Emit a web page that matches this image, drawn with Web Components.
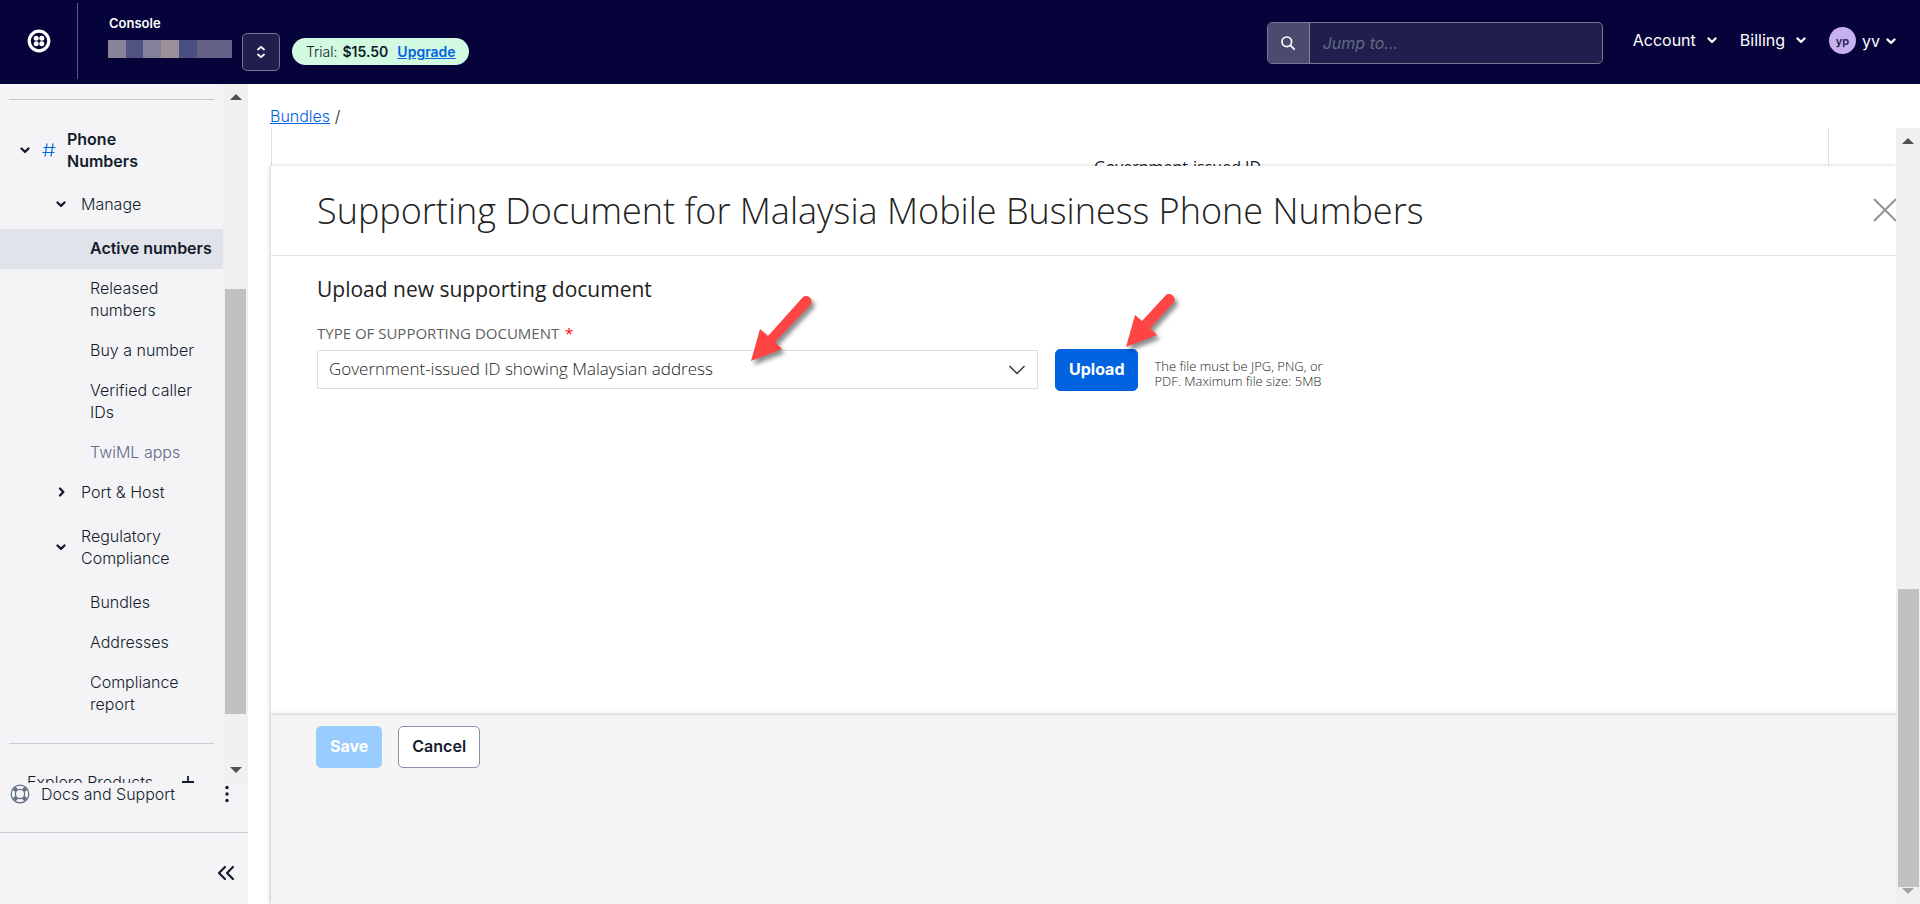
<!DOCTYPE html>
<html lang="en">
<head>
<meta charset="utf-8">
<title>Supporting Document - Console</title>
<style>
html, body { margin: 0; height: 100%; overflow: hidden; }
body { font: 16px/22px Inter, "Open Sans", sans-serif; color: #121c2d; background: #fff; }
</style>
</head>
<body>
<console-app></console-app>

<script>
const define = (name, html, setup) => customElements.define(name, class extends HTMLElement {
  connectedCallback() {
    if (this.shadowRoot) return;
    const t = document.createElement('template');
    t.innerHTML = '<style>*{box-sizing:border-box}</style>' + (typeof html === 'function' ? html(this) : html);
    this.attachShadow({ mode: 'open' }).append(t.content.cloneNode(true));
    if (setup) setup(this);
  }
});

/* Icons: [width, height, svg body] */
const ICONS = {
  logo: [24, 24, '<circle cx="12" cy="12" r="9.8" fill="none" stroke="#fff" stroke-width="3.2"/><g fill="#fff"><circle cx="9.2" cy="9.2" r="2.5"/><circle cx="14.8" cy="9.2" r="2.5"/><circle cx="9.2" cy="14.8" r="2.5"/><circle cx="14.8" cy="14.8" r="2.5"/></g>'],
  down: [10, 10, '<path d="M1.5 3.5 5 6.8 8.5 3.5" fill="none" stroke="currentColor" stroke-width="2.3" stroke-linecap="round" stroke-linejoin="round"/>'],
  right: [10, 10, '<path d="M4 1.5 7.3 5 4 8.5" fill="none" stroke="currentColor" stroke-width="2.3" stroke-linecap="round" stroke-linejoin="round"/>'],
  updown: [10, 14, '<path d="M2 4.5 5 1.8 8 4.5M2 9.5 5 12.2 8 9.5" fill="none" stroke="currentColor" stroke-width="1.8" stroke-linecap="round" stroke-linejoin="round"/>'],
  search: [16, 16, '<circle cx="6.8" cy="6.8" r="4.8" fill="none" stroke="currentColor" stroke-width="1.7"/><path d="m10.4 10.4 3.8 3.8" stroke="currentColor" stroke-width="1.9" stroke-linecap="round"/>'],
  hash: [14, 14, '<path d="M5 .5 3 13.5M11 .5 9 13.5M1.5 4.5h12M.5 9.5h12" fill="none" stroke="#0263e0" stroke-width="1.2"/>'],
  plus: [14, 14, '<path d="M7 1v12M1 7h12" stroke="currentColor" stroke-width="1.8"/>'],
  buoy: [20, 20, '<g fill="none" stroke="#606b85"><circle cx="10" cy="10" r="8.8" stroke-width="1.2"/><circle cx="10" cy="10" r="4.6" stroke-width="1.2"/><path d="M4.300 4.300 6.500 6.500M15.700 4.300 13.500 6.500M4.300 15.700 6.500 13.500M15.700 15.700 13.500 13.500" stroke-width="4"/></g>'],
  dots: [4, 18, '<g fill="currentColor"><circle cx="2" cy="2.5" r="1.7"/><circle cx="2" cy="9" r="1.7"/><circle cx="2" cy="15.5" r="1.7"/></g>'],
  collapse: [18, 16, '<path d="M8 2 2 8l6 6M16 2l-6 6 6 6" fill="none" stroke="currentColor" stroke-width="2.2" stroke-linecap="round" stroke-linejoin="round"/>'],
  close: [24, 24, '<path d="M1 1 23 23M23 1 1 23" stroke="#949494" stroke-width="2"/>'],
  caret: [12, 6, '<path d="M0 6 6 0l6 6z" fill="currentColor"/>']
};
define('ui-icon', el => {
  const [w, h, body] = ICONS[el.getAttribute('name')];
  return `<style>:host{display:block;flex:none;width:${w}px;height:${h}px}svg{display:block}</style>
    <svg width="${w}" height="${h}" viewBox="0 0 ${w} ${h}" aria-hidden="true">${body}</svg>`;
});

/* Scroll track: the thumb is placed by the proportions before and after it */
define('scroll-track', el => {
  const [a, b, c] = el.getAttribute('parts').split(' ');
  return `<style>
    :host{display:flex;flex-direction:column;align-items:center;background:#f0f0f0;color:#505050;padding:10px 0}
    .track{flex:1;width:21px;display:flex;flex-direction:column;padding:1px 0;min-height:0}
    .thumb{background:#c1c1c1}
    .end{transform:rotate(180deg);color:var(--end,#505050)}
    </style>
    <ui-icon name="caret"></ui-icon>
    <div class="track"><i style="flex:${a}"></i><i class="thumb" style="flex:${b}"></i><i style="flex:${c}"></i></div>
    <ui-icon class="end" name="caret"></ui-icon>`;
});

define('console-header', `<style>
  :host{display:flex;align-items:flex-start;height:84px;background:#06033a;color:#fff;padding-right:24px}
  a{color:inherit;text-decoration:none}
  button{font:inherit;color:inherit;background:none;border:0;padding:0;display:flex;align-items:center}
  .logo{width:78px;height:76px;margin-top:3px;border-right:1px solid #5b5980;display:grid;place-items:center}
  .acct{margin:12px 10px 0 30px;display:flex;flex-direction:column;gap:6px;font-size:13px;font-weight:600}
  .acct>span:first-child{padding-left:1px}
  .mask{display:flex;width:124px;height:18px}
  .mask i{flex:1}
  .switch{width:38px;height:38px;margin-top:33px;border:1px solid #77758f;border-radius:5px;background:#211d4c;justify-content:center}
  .trial{margin:38px 0 0 12px;height:27px;display:flex;align-items:center;background:#d1fae0;color:#121c2d;border-radius:14px;padding:0 13px 0 14px;font-size:14px;font-weight:300}
  .trial b{font-weight:600;margin:0 9px 0 5px;font-size:14px}
  .trial a{color:#0263e0;font-weight:600;text-decoration:underline}
  form{margin:22px 30px 0 auto;width:336px;height:42px;display:flex;border:1px solid #77758f;border-radius:5px;background:#211d4c;overflow:hidden}
  form button{width:42px;background:#4c4a6e;border-right:1px solid #8684a0;justify-content:center}
  input{flex:1;min-width:0;border:0;background:none;padding:0 13px;font:italic 16px Inter,sans-serif;color:#fff}
  input::placeholder{color:#606b85;opacity:1}
  nav{display:flex;margin-top:27px;height:27px;gap:23px}
  nav button{gap:11px;padding-bottom:2px}
  nav .user{gap:6px;padding:0}
  .av{width:27px;height:27px;border-radius:50%;background:#c8afef;color:#211d4c;font-size:11px;font-weight:600;display:grid;place-items:center}
  </style>
  <a class="logo" href="#" aria-label="Home"><ui-icon name="logo"></ui-icon></a>
  <div class="acct"><span>Console</span>
    <span class="mask"><i style="background:#8a8299"></i><i style="background:#505282"></i><i style="background:#858099"></i><i style="background:#9c9199"></i><i style="background:#4a4e80"></i><i style="background:#626083"></i><i style="background:#626288"></i></span></div>
  <button class="switch" aria-label="Switch account"><ui-icon name="updown"></ui-icon></button>
  <div class="trial">Trial: <b>$15.50</b><a href="#">Upgrade</a></div>
  <form><button type="button" aria-label="Search"><ui-icon name="search"></ui-icon></button><input aria-label="Jump to" placeholder="Jump to..."></form>
  <nav><button>Account<ui-icon name="down"></ui-icon></button><button>Billing<ui-icon name="down"></ui-icon></button>
  <button class="user"><span class="av">yp</span>yv<ui-icon name="down"></ui-icon></button></nav>`);

/* Navigation row; level sets the indent, open/closed shows a chevron */
define('nav-item', el => {
  const state = el.getAttribute('state');
  const icon = state ? `<ui-icon name="${state === 'open' ? 'down' : 'right'}"></ui-icon>` : '';
  return `<style>
    :host{display:block;font-weight:300}
    :host([level="1"]){font-weight:600}
    :host([current]){background:#e1e3ea;font-weight:600}
    :host([muted]) a{color:#606b85}
    a{display:flex;align-items:center;color:#121c2d;text-decoration:none;padding:8px 8px 10px 90px}
    :host([level="1"]) a{padding:9px 60px 9px 20px}
    :host([level="2"]) a{padding:8px 40px 10px 56px;gap:15px}
    :host([level="2"][state="open"]) a{padding-top:12px;padding-bottom:14px}
    ui-icon[name="hash"]{margin:0 11px 0 12px}
    </style><a href="#">${icon}${el.hasAttribute('hash') ? '<ui-icon name="hash"></ui-icon>' : ''}<span><slot></slot></span></a>`;
});

define('side-nav', `<style>
  :host{display:flex;flex-direction:column;background:#f4f4f6;min-height:0}
  .scroll{flex:1;min-height:0;display:flex}
  .list{flex:1;overflow:hidden;min-width:0}
  scroll-track{width:25px}
  hr{border:0;border-top:1px solid #cacdd8;margin:0 9px}
  .list>hr:first-child{margin-top:15px;margin-bottom:19px;border-color:#c8c8cb}
  .list>hr.mid{margin-top:18px}
  .explore{display:flex;align-items:center;padding:27px 28px 0 27px;justify-content:space-between;font-weight:300}
  .foot{flex:none;display:flex;align-items:center;padding:0 19px 27px 10px;border-bottom:1px solid #cacdd8;font-weight:300}
  .foot a{flex:1;display:flex;align-items:center;gap:11px;color:#121c2d;text-decoration:none}
  button{border:0;background:none;padding:0;color:inherit;font:inherit}
  .fold{flex:none;height:71px;display:flex;align-items:center;justify-content:flex-end;padding:9px 13px 0 0}
  </style>
  <div class="scroll"><div class="list">
    <hr>
    <nav-item level="1" state="open" hash>Phone Numbers</nav-item>
    <nav-item level="2" state="open">Manage</nav-item>
    <nav-item current>Active numbers</nav-item>
    <nav-item>Released<br>numbers</nav-item>
    <nav-item>Buy a number</nav-item>
    <nav-item>Verified caller<br>IDs</nav-item>
    <nav-item muted>TwiML apps</nav-item>
    <nav-item level="2" state="closed">Port &amp; Host</nav-item>
    <nav-item level="2" state="open">Regulatory Compliance</nav-item>
    <nav-item>Bundles</nav-item>
    <nav-item>Addresses</nav-item>
    <nav-item>Compliance<br>report</nav-item>
    <hr class="mid">
    <div class="explore">Explore Products<ui-icon name="plus"></ui-icon></div>
  </div><scroll-track parts="188 426 52"></scroll-track></div>
  <div class="foot"><a href="#"><ui-icon name="buoy"></ui-icon>Docs and Support</a><button aria-label="More"><ui-icon name="dots"></ui-icon></button></div>
  <div class="fold"><button aria-label="Collapse sidebar"><ui-icon name="collapse"></ui-icon></button></div>`);

define('ui-button', `<style>
  :host{display:block;flex:none}
  button{font:600 16px/22px Inter,sans-serif;height:42px;padding:0 13px 2px;border-radius:5px;border:1px solid #8891aa;background:#fff;color:#121c2d;display:block}
  :host([kind="primary"]) button{background:#0263e0;border-color:#0263e0;color:#fff;font-weight:700}
  :host([kind="off"]) button{background:#99cdff;border-color:#99cdff;color:#fff;font-weight:700}
  </style><button type="button"><slot></slot></button>`);

/* Callout arrow drawn over the form */
define('callout-arrow', el => `<style>
  :host{position:absolute;pointer-events:none;filter:drop-shadow(3px 4px 2px rgba(0,0,0,.45))}
  svg{display:block}</style>
  ${el.getAttribute('size') === 'small'
    ? '<svg width="52" height="58" viewBox="0 0 52 58"><path d="M1 56 10 24 17 30 41 4A5.5 5.5 0 0 1 49 11L25 37 32 44Z" fill="#ff4444"/></svg>'
    : '<svg width="66" height="70" viewBox="0 0 66 70"><path d="M1 68 10 36 18 43 53 4A5.5 5.5 0 0 1 61 11L25 49 32 56Z" fill="#ff4444"/></svg>'}`);

define('document-dialog', `<style>
  :host{display:flex;flex-direction:column;background:#fff;font-family:"Open Sans",sans-serif;color:#222;box-shadow:-1px 0 4px rgba(0,0,0,.2);clip-path:inset(-3px 0 0 -5px)}
  header{height:90px;flex:none;display:flex;align-items:center;justify-content:space-between;border-bottom:1px solid #e0e0e0;padding-left:46px;overflow:hidden}
  h1{font-size:36px;font-weight:300;line-height:44px;margin:0;color:#222}
  .x{border:0;background:none;padding:0 0 2px;margin-right:-1px}
  form{flex:1;padding:21px 46px}
  h2{font-size:21px;font-weight:400;line-height:24px;margin:0 0 22px}
  label{display:block;font-size:15px;line-height:20px;color:#606060;margin-bottom:6px}
  label span{color:#f00;margin-left:2px}
  .row{display:flex;align-items:center}
  .pick{position:relative;flex:0 1 721px;margin:1px 17px 0 0;display:grid;align-items:center;align-self:flex-start}
  select{appearance:none;width:100%;height:39px;border:1px solid #dedede;border-radius:0;background:#fff;padding:0 40px 2px 11px;font:300 17px "Open Sans",sans-serif;color:#222}
  .pick svg{position:absolute;right:12px}
  .hint{font-size:13px;line-height:15px;font-weight:300;margin:7px 0 0 16px}
  callout-arrow[size="small"]{left:100%;bottom:40px;margin-left:87px}
  callout-arrow[size="large"]{right:222px;bottom:26px}
  footer{flex:none;height:190px;background:#f5f5f5;border-top:1px solid #d8d8d8;box-shadow:0 -1px 3px rgba(0,0,0,.12);padding:11px 45px;display:flex;align-items:flex-start;gap:16px}
  </style>
  <header><h1>Supporting Document for Malaysia Mobile Business Phone Numbers</h1><button class="x" aria-label="Close"><ui-icon name="close"></ui-icon></button></header>
  <form>
    <h2>Upload new supporting document</h2>
    <label for="type">TYPE OF SUPPORTING DOCUMENT <span>*</span></label>
    <div class="row">
      <div class="pick"><select id="type"><option>Government-issued ID showing Malaysian address</option></select>
        <svg width="18" height="10" viewBox="0 0 18 10"><path d="M1.5 1 9 8.5 16.5 1" fill="none" stroke="#333" stroke-width="1.4"/></svg>
        <callout-arrow size="large"></callout-arrow><callout-arrow size="small"></callout-arrow></div>
      <ui-button kind="primary">Upload</ui-button>
      <div class="hint">The file must be JPG, PNG, or<br>PDF. Maximum file size: 5MB</div>
    </div>
  </form>
  <footer><ui-button kind="off">Save</ui-button><ui-button>Cancel</ui-button></footer>`);

define('console-app', `<style>
  :host{display:grid;grid-template:auto minmax(0,1fr) / 248px minmax(0,1fr);height:100vh}
  console-header{grid-column:1/-1}
  main{display:flex;flex-direction:column;min-width:0;min-height:0}
  .crumbs{flex:none;height:44px;padding:21px 22px 0;font-weight:300}
  .crumbs a{color:#0263e0}
  .view{flex:1;display:flex;min-height:0;padding-left:22px}
  .pane{flex:1;display:flex;flex-direction:column;min-width:0;border-left:1px solid transparent}
  .behind{flex:none;height:38px;margin:0 67px 0 0;border:solid #e0e0e0;border-width:0 1px;overflow:hidden;display:grid;grid-template-columns:822px 1fr;font:16px/22px "Open Sans",sans-serif;padding-top:28px}
  .behind span{grid-column:2}
  document-dialog{flex:1;min-height:0}
  scroll-track{width:24px;--end:#a3a3a3;flex:none}
  </style>
  <console-header></console-header>
  <side-nav></side-nav>
  <main>
    <div class="crumbs"><a href="#">Bundles</a> /</div>
    <div class="view"><div class="pane">
      <div class="behind"><span>Government-issued ID</span></div>
      <document-dialog></document-dialog></div>
      <scroll-track parts="444 298 0"></scroll-track></div>
  </main>`);
</script>
</body>
</html>
